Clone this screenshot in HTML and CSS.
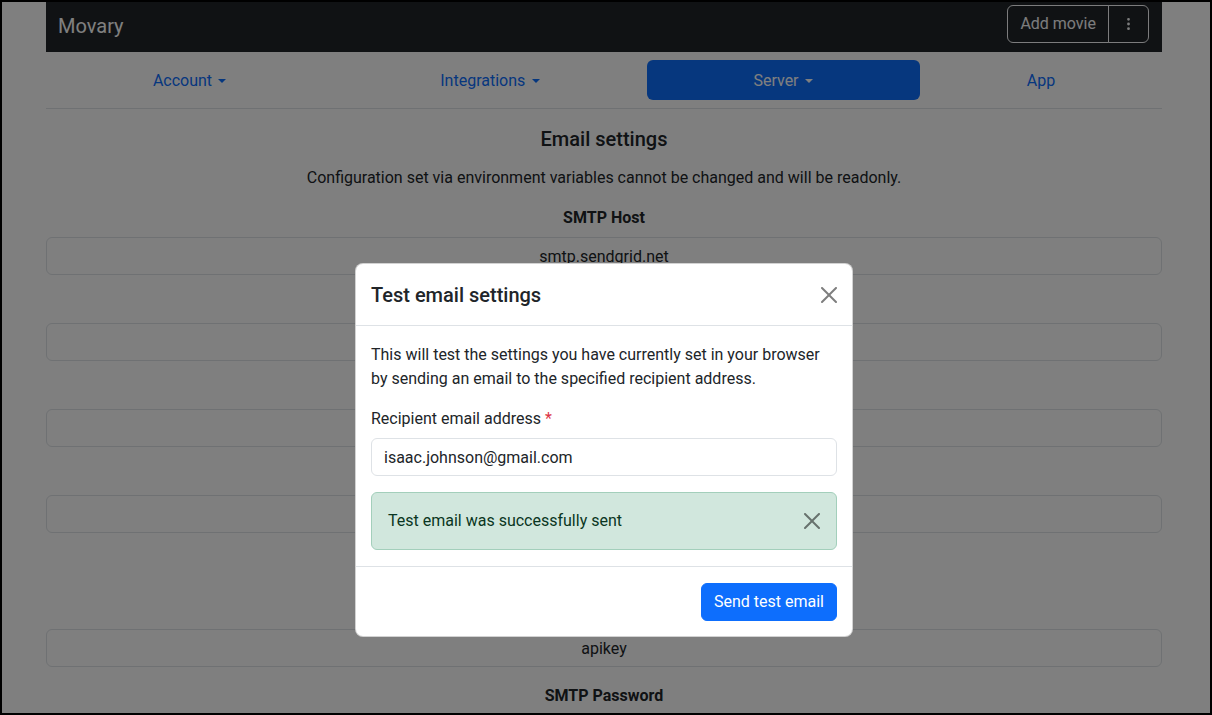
FILE: index.html
```html
<!DOCTYPE html>
<html lang="en">
<head>
    <meta charset="UTF-8">
    <meta name="viewport" content="width=device-width, initial-scale=1.0">
    <title>Movary - Email settings</title>
    <link rel="stylesheet" href="styles.css">
</head>
<body>
    <div class="frame">
        <div class="screen">
            <div class="container">
                <nav class="navbar">
                    <span class="brand">Movary</span>
                    <div class="btn-group">
                        <button class="btn-outline">Add movie</button>
                        <button class="btn-outline btn-dots" aria-label="More">
                            <svg width="16" height="16" viewBox="0 0 16 16" fill="currentColor"><path d="M9.5 13a1.5 1.5 0 1 1-3 0 1.5 1.5 0 0 1 3 0m0-5a1.5 1.5 0 1 1-3 0 1.5 1.5 0 0 1 3 0m0-5a1.5 1.5 0 1 1-3 0 1.5 1.5 0 0 1 3 0"/></svg>
                        </button>
                    </div>
                </nav>

                <ul class="nav-pills">
                    <li><a class="nav-link dropdown-toggle">Account</a></li>
                    <li><a class="nav-link dropdown-toggle">Integrations</a></li>
                    <li><a class="nav-link dropdown-toggle active">Server</a></li>
                    <li><a class="nav-link">App</a></li>
                </ul>
                <hr class="divider">

                <h5 class="section-title">Email settings</h5>
                <p class="section-text">Configuration set via environment variables cannot be changed and will be readonly.</p>

                <div class="field">
                    <label>SMTP Host</label>
                    <input type="text" class="form-control" value="smtp.sendgrid.net" readonly>
                </div>
                <div class="field">
                    <label>SMTP Port</label>
                    <input type="text" class="form-control" value="587" readonly>
                </div>
                <div class="field">
                    <label>From address</label>
                    <input type="text" class="form-control" value="isaac@freshbrewed.science" readonly>
                </div>
                <div class="field">
                    <label>Encryption</label>
                    <input type="text" class="form-control" value="tls" readonly>
                </div>
                <div class="field check-field">
                    <label>SMTP with authentication</label>
                    <input type="checkbox" checked>
                </div>
                <div class="field">
                    <label>SMTP User</label>
                    <input type="text" class="form-control" value="apikey" readonly>
                </div>
                <div class="field">
                    <label>SMTP Password</label>
                    <input type="password" class="form-control" value="secretsecret" readonly>
                </div>
            </div>

            <div class="modal-layer">
                <div class="backdrop"></div>
                <div class="modal-content">
                    <div class="modal-header">
                        <h5 class="modal-title">Test email settings</h5>
                        <button class="btn-close" aria-label="Close">
                            <svg width="16" height="16" viewBox="0 0 16 16" fill="currentColor"><path d="M.293.293a1 1 0 0 1 1.414 0L8 6.586 14.293.293a1 1 0 1 1 1.414 1.414L9.414 8l6.293 6.293a1 1 0 0 1-1.414 1.414L8 9.414l-6.293 6.293a1 1 0 0 1-1.414-1.414L6.586 8 .293 1.707a1 1 0 0 1 0-1.414"/></svg>
                        </button>
                    </div>
                    <div class="modal-body">
                        <p class="modal-text">This will test the settings you have currently set in your browser by sending an email to the specified recipient address.</p>
                        <label class="form-label">Recipient email address <span class="required">*</span></label>
                        <input type="email" class="form-input" value="isaac.johnson@gmail.com">
                        <div class="alert-success">
                            <span>Test email was successfully sent</span>
                            <button class="btn-close" aria-label="Close">
                                <svg width="16" height="16" viewBox="0 0 16 16" fill="currentColor"><path d="M.293.293a1 1 0 0 1 1.414 0L8 6.586 14.293.293a1 1 0 1 1 1.414 1.414L9.414 8l6.293 6.293a1 1 0 0 1-1.414 1.414L8 9.414l-6.293 6.293a1 1 0 0 1-1.414-1.414L6.586 8 .293 1.707a1 1 0 0 1 0-1.414"/></svg>
                            </button>
                        </div>
                    </div>
                    <div class="modal-footer">
                        <button class="btn-primary">Send test email</button>
                    </div>
                </div>
            </div>
        </div>
    </div>
</body>
</html>
```

FILE: styles.css
```css
body {
    margin: 0;
    font-family: 'Roboto', 'Liberation Sans', sans-serif;
    font-size: 16px;
    line-height: 24px;
    color: #212529;
    background-color: #fff;
}

.frame {
    height: 715px;
    border: 2px solid #000;
    box-sizing: border-box;
    overflow: hidden;
}

.screen {
    position: relative;
    height: 100%;
    padding-right: 4px;
}

.container {
    width: 1116px;
    margin: 0 auto;
}

/* top bar */
.navbar {
    height: 50px;
    box-sizing: border-box;
    padding: 3px 13px 9px 12px;
    display: flex;
    align-items: center;
    justify-content: space-between;
    background-color: #212529;
}

.brand {
    font-size: 20px;
    line-height: 30px;
    color: #fff;
    margin-top: 4px;
}

.btn-group {
    display: flex;
}

.btn-outline {
    height: 38px;
    padding: 6px 12px;
    font-family: inherit;
    font-size: 16px;
    line-height: 24px;
    color: #f8f9fa;
    background: transparent;
    border: 1px solid #f8f9fa;
    border-radius: 6px 0 0 6px;
}

.btn-dots {
    width: 41px;
    margin-left: -1px;
    border-radius: 0 6px 6px 0;
    display: flex;
    align-items: center;
    justify-content: center;
}

/* tabs */
.nav-pills {
    list-style: none;
    margin: 8px 0 0 0;
    padding: 0;
    display: flex;
}

.nav-pills li {
    flex: 1 1 auto;
    text-align: center;
}

.nav-link {
    display: block;
    padding: 9px 16px 7px 16px;
    color: #0d6efd;
    border-radius: 6px;
}

.nav-link.active {
    color: #fff;
    background-color: #0d6efd;
}

.dropdown-toggle::after {
    content: "";
    display: inline-block;
    margin-left: 0.4em;
    vertical-align: 0.2em;
    border-top: 0.3em solid;
    border-right: 0.3em solid transparent;
    border-left: 0.3em solid transparent;
}

.divider {
    margin: 8px 0 0 0;
    border: 0;
    border-top: 1px solid #dee2e6;
}

/* settings form */
.section-title {
    margin: 18px 0 15px 0;
    font-size: 20px;
    font-weight: 500;
    text-align: center;
}

.section-text {
    margin: 0 0 15px 0;
    text-align: center;
}

.field {
    margin-bottom: 16px;
    text-align: center;
}

.field label {
    display: block;
    font-weight: 700;
    padding-top: 1px;
    line-height: 23px;
    margin-bottom: 8px;
}

.form-control {
    display: block;
    width: 100%;
    height: 38px;
    box-sizing: border-box;
    padding: 6px 12px;
    font-family: inherit;
    font-size: 16px;
    text-align: center;
    color: #212529;
    background-color: #fff;
    border: 1px solid #dee2e6;
    border-radius: 6px;
}

.check-field {
    height: 32px;
    display: flex;
    align-items: center;
    justify-content: center;
    gap: 8px;
}

.check-field label {
    margin-bottom: 0;
}

.check-field input {
    margin: 0;
    width: 16px;
    height: 16px;
}

/* modal */
.modal-layer {
    position: absolute;
    inset: 0;
    padding: 261px 4px 0 0;
    display: flex;
    flex-direction: column;
    align-items: center;
}

.backdrop {
    position: absolute;
    inset: 0;
    background-color: #000;
    opacity: 0.5;
}

.modal-content {
    position: relative;
    width: 498px;
    box-sizing: border-box;
    background-color: #fff;
    border: 1px solid rgba(0, 0, 0, 0.175);
    border-radius: 8px;
}

.modal-header {
    display: flex;
    align-items: center;
    justify-content: space-between;
    padding: 16px 15px 15px 15px;
    border-bottom: 1px solid #dee2e6;
}

.modal-title {
    margin: 0;
    font-size: 20px;
    line-height: 30px;
    font-weight: 500;
}

.btn-close {
    width: 16px;
    height: 16px;
    padding: 0;
    border: 0;
    background: transparent;
    color: #000;
    opacity: 0.5;
    display: flex;
}

.modal-body {
    padding: 17px 15px 16px 15px;
}

.modal-text {
    margin: 0 0 16px 0;
}

.form-label {
    display: block;
    margin-bottom: 7px;
}

.required {
    color: #dc3545;
}

.form-input {
    display: block;
    width: 100%;
    height: 38px;
    box-sizing: border-box;
    padding: 6px 12px;
    font-family: inherit;
    font-size: 16px;
    color: #212529;
    border: 1px solid #dee2e6;
    border-radius: 6px;
}

.alert-success {
    margin-top: 16px;
    padding: 16px;
    display: flex;
    align-items: center;
    justify-content: space-between;
    color: #0a3622;
    background-color: #d1e7dd;
    border: 1px solid #a3cfbb;
    border-radius: 6px;
}

.modal-footer {
    display: flex;
    justify-content: flex-end;
    padding: 16px 15px 15px 15px;
    border-top: 1px solid #dee2e6;
}

.btn-primary {
    height: 38px;
    padding: 6px 12px;
    font-family: inherit;
    font-size: 16px;
    line-height: 24px;
    color: #fff;
    background-color: #0d6efd;
    border: 1px solid #0d6efd;
    border-radius: 6px;
}
```
